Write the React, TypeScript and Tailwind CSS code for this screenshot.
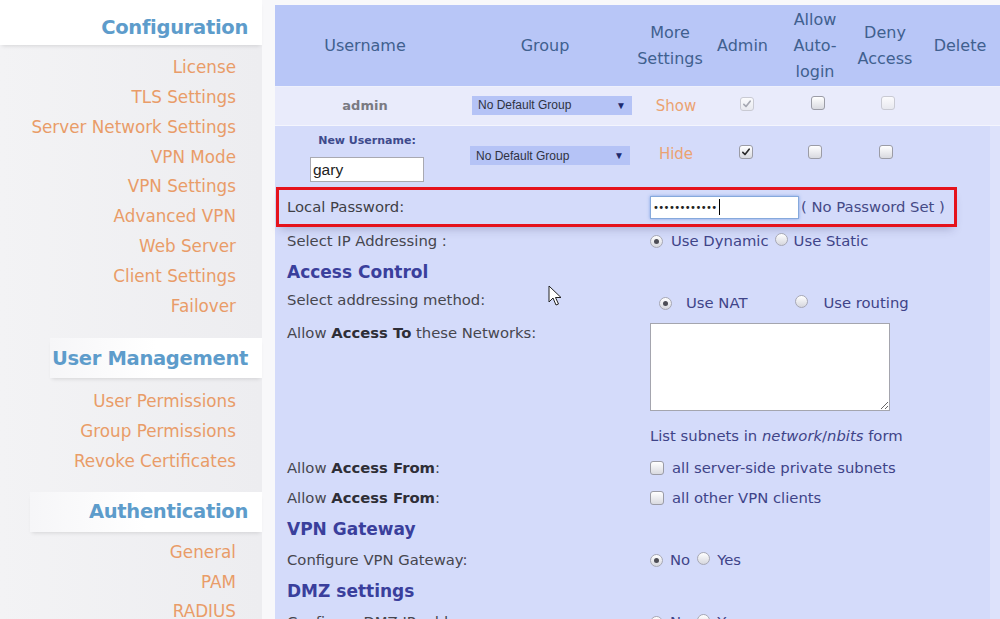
import React from 'react';

const sideFont = { fontFamily: '"DejaVu Sans", Verdana, sans-serif' };

const Checkbox: React.FC<{ checked?: boolean; disabled?: boolean }> = ({ checked, disabled }) => (
    <span
        className={`relative inline-flex items-center justify-center w-[14px] h-[14px] rounded-[3px] border ${
            disabled ? 'border-[#c9cad3] bg-gradient-to-b from-[#fbfbfd] to-[#e8e9ef]' : 'border-[#9b9ca6] bg-gradient-to-b from-white to-[#d9dae0]'
        }`}
    >
        {checked && (
            <svg viewBox="0 0 12 12" className="w-[10px] h-[10px]">
                <path
                    d="M2.2 6.4 L4.8 9 L9.8 2.6"
                    fill="none"
                    stroke={disabled ? '#a6a8b2' : '#2b2b2b'}
                    strokeWidth="2"
                    strokeLinecap="round"
                    strokeLinejoin="round"
                />
            </svg>
        )}
    </span>
);

const Radio: React.FC<{ checked?: boolean }> = ({ checked }) => (
    <span className="inline-flex items-center justify-center w-[13px] h-[13px] rounded-full border border-[#a7a8b4] bg-gradient-to-b from-white to-[#d6d7de]">
        {checked && <span className="w-[5px] h-[5px] rounded-full bg-[#4d4d55]" />}
    </span>
);

const Select: React.FC = () => (
    <div
        className="flex items-center justify-between w-[160px] h-[19px] px-[6px] bg-[#b5c3f6] text-[12px] text-[#2f3242]"
        style={{ fontFamily: '"Liberation Sans", Arial, sans-serif' }}
    >
        <span>No Default Group</span>
        <span className="text-[10px] text-[#1d2a6e]">▼</span>
    </div>
);

const SideHeader: React.FC<{ title: string; from: string; h?: string }> = ({ title, from, h = 'h-[40px]' }) => (
    <div className={`${h} flex items-center justify-end pr-[14px] bg-gradient-to-r ${from} via-white to-white shadow-[0_3px_4px_-2px_rgba(0,0,0,0.12)]`}>
        <span className="whitespace-nowrap text-[19.5px] font-bold text-[#5d9ccb] tracking-[-0.3px]">{title}</span>
    </div>
);

const SideLink: React.FC<{ label: string }> = ({ label }) => (
    <div className="h-[29.8px] flex items-center justify-end pr-[26px] whitespace-nowrap text-[16.8px] text-[#e99c68]">{label}</div>
);

const Sidebar: React.FC = () => (
    <aside className="w-[262px] shrink-0 bg-gradient-to-r from-[#f3f3f5] to-[#ededf0]" style={sideFont}>
        <SideHeader title="Configuration" from="from-white" h="h-[45px] pt-[10px]" />
        <div className="pt-[8px]">
            {['License', 'TLS Settings', 'Server Network Settings', 'VPN Mode', 'VPN Settings', 'Advanced VPN', 'Web Server', 'Client Settings', 'Failover'].map((l) => (
                <SideLink key={l} label={l} />
            ))}
        </div>
        <div className="mt-[17px] ml-[50px]">
            <SideHeader title="User Management" from="from-[#f6f6f8]" />
        </div>
        <div className="pt-[9px]">
            {['User Permissions', 'Group Permissions', 'Revoke Certificates'].map((l) => (
                <SideLink key={l} label={l} />
            ))}
        </div>
        <div className="mt-[15px] ml-[30px]">
            <SideHeader title="Authentication" from="from-[#f6f6f8]" />
        </div>
        <div className="pt-[6px]">
            {['General', 'PAM', 'RADIUS'].map((l) => (
                <SideLink key={l} label={l} />
            ))}
        </div>
    </aside>
);

const FormRow: React.FC<{ h: string; label: React.ReactNode; children?: React.ReactNode }> = ({ h, label, children }) => (
    <div className={`flex items-center ${h}`}>
        <div className="w-[375px] shrink-0 pl-[12px] whitespace-nowrap text-[#46464e]">{label}</div>
        <div className="flex items-center whitespace-nowrap text-[#3f4488]">{children}</div>
    </div>
);

const Heading: React.FC<{ h: string; title: string }> = ({ h, title }) => (
    <div className={`flex items-center ${h} pl-[12px] text-[17px] font-bold text-[#3a3f9c]`}>{title}</div>
);

const Cursor: React.FC = () => (
    <svg viewBox="0 0 14 22" className="absolute left-[273px] top-[280px] w-[14px] h-[22px]">
        <path d="M1 1 L1 17 L5 13 L8 20 L10.5 19 L7.5 12.5 L13 12.5 Z" fill="white" stroke="#222" strokeWidth="1" strokeLinejoin="round" />
    </svg>
);

const cols = 'grid grid-cols-[180px_180px_70px_75px_70px_70px_80px]';

const App: React.FC = () => {
    return (
        <div className="flex w-[1000px] h-[619px] overflow-hidden bg-[#f8f8fa]">
            <Sidebar />
            <main
                className="relative ml-[13px] mt-[5px] flex-1 bg-[#d4dbfa] text-[14.8px]"
                style={{ fontFamily: '"DejaVu Sans", Verdana, sans-serif' }}
            >
                {/* table header */}
                <div className={`${cols} h-[82px] bg-[#b8c6f7] text-[16px] leading-[26px] text-[#40608f] text-center border-b border-[#eef0fc]`}>
                    <div className="flex items-center justify-center">Username</div>
                    <div className="flex items-center justify-center">Group</div>
                    <div className="flex items-center justify-center">More<br />Settings</div>
                    <div className="flex items-center justify-center">Admin</div>
                    <div className="flex items-center justify-center">Allow<br />Auto-<br />login</div>
                    <div className="flex items-center justify-center">Deny<br />Access</div>
                    <div className="flex items-center justify-center">Delete</div>
                </div>

                {/* admin row */}
                <div className={`${cols} h-[39px] bg-[#e9ebfb] border-b border-[#f4f5fd] items-center`}>
                    <div className="text-center text-[13px] font-bold text-[#7a7a82]">admin</div>
                    <div className="pl-[17px] pb-[2px]"><Select /></div>
                    <div className="text-center pl-[12px] text-[15px] text-[#eba271]">Show</div>
                    <div className="flex justify-center pl-[8px] pb-[4px]"><Checkbox checked disabled /></div>
                    <div className="flex justify-center pl-[6px] pb-[6px]"><Checkbox /></div>
                    <div className="flex justify-center pl-[6px] pb-[6px]"><Checkbox disabled /></div>
                    <div />
                </div>

                <div className="flex">
                    <div className="w-[715px] shrink-0">
                        {/* new user row */}
                        <div className={`${cols} h-[58px] items-start`}>
                            <div className="flex flex-col items-center pt-[7px]">
                                <span className="text-[11px] font-bold text-[#3e4a8c] pl-[4px]">New Username:</span>
                                <div
                                    className="mt-[7px] ml-[4px] w-[114px] h-[25px] bg-white border border-[#a9a9b1] flex items-end px-[2px] text-[15.5px] leading-[22px] text-[#222]"
                                    style={{ fontFamily: '"Liberation Sans", Arial, sans-serif' }}
                                >
                                    gary
                                </div>
                            </div>
                            <div className="pl-[15px] pt-[20px]"><Select /></div>
                            <div className="text-center pl-[12px] pt-[17px] text-[15px] text-[#eba271]">Hide</div>
                            <div className="flex justify-center pl-[6px] pt-[19px]"><Checkbox checked /></div>
                            <div className="flex justify-center pt-[19px]"><Checkbox /></div>
                            <div className="flex justify-center pl-[2px] pt-[19px]"><Checkbox /></div>
                            <div />
                        </div>

                        {/* form */}
                        <div className="mt-[3px]">
                            <div className="ml-[1px] w-[681px] h-[40px] border-[3px] border-[#e5131c] flex items-center shadow-[0_6px_10px_-4px_rgba(40,40,90,0.25)]">
                                <div className="w-[371px] shrink-0 pl-[8px] text-[#3f3f46]">Local Password:</div>
                                <div className="w-[149px] h-[23px] bg-white border border-[#86a9dc] shadow-[0_0_3px_rgba(90,140,220,0.7)] flex items-center pl-[2px] text-[10px] tracking-[-0.6px] text-[#222]">
                                    ••••••••••••<span className="ml-[2px] w-px h-[16px] bg-black" />
                                </div>
                                <span className="ml-[2px] whitespace-nowrap text-[#454a86]">( No Password Set )</span>
                            </div>

                            <div className="pt-[2px]">
                                <FormRow h="h-[24px]" label="Select IP Addressing :">
                                    <Radio checked />
                                    <span className="ml-[8px]">Use Dynamic</span>
                                    <span className="ml-[6px]"><Radio /></span>
                                    <span className="ml-[6px]">Use Static</span>
                                </FormRow>
                                <Heading h="h-[36px] pt-[4px]" title="Access Control" />
                                <FormRow h="h-[22px]" label="Select addressing method:">
                                    <span className="ml-[9px] mt-[6px] flex items-center">
                                        <Radio checked />
                                        <span className="ml-[14px]">Use NAT</span>
                                        <span className="ml-[48px]"><Radio /></span>
                                        <span className="ml-[15px]">Use routing</span>
                                    </span>
                                </FormRow>
                                <div className="flex h-[104px]">
                                    <div className="w-[375px] shrink-0 pl-[12px] pt-[12px] leading-[20px] text-[#46464e]">
                                        Allow <b className="text-[#2e2e36]">Access To</b> these Networks:
                                    </div>
                                    <textarea readOnly className="mt-[12px] w-[240px] h-[88px] bg-white border border-[#a4a5ae] resize-y" />
                                </div>
                                <FormRow h="h-[42px]" label="">
                                    <span>List subnets in <i>network</i>/<i>nbits</i> form</span>
                                </FormRow>
                                <FormRow h="h-[22px]" label={<>Allow <b className="text-[#2e2e36]">Access From</b>:</>}>
                                    <Checkbox />
                                    <span className="ml-[8px]">all server-side private subnets</span>
                                </FormRow>
                                <FormRow h="h-[38px]" label={<>Allow <b className="text-[#2e2e36]">Access From</b>:</>}>
                                    <Checkbox />
                                    <span className="ml-[8px]">all other VPN clients</span>
                                </FormRow>
                                <Heading h="h-[26px]" title="VPN Gateway" />
                                <FormRow h="h-[34px]" label="Configure VPN Gateway:">
                                    <Radio checked />
                                    <span className="ml-[7px]">No</span>
                                    <span className="ml-[7px]"><Radio /></span>
                                    <span className="ml-[7px]">Yes</span>
                                </FormRow>
                                <Heading h="h-[30px]" title="DMZ settings" />
                                <FormRow h="h-[30px]" label="Configure DMZ IP address:">
                                    <Radio checked />
                                    <span className="ml-[7px]">No</span>
                                    <span className="ml-[7px]"><Radio /></span>
                                    <span className="ml-[7px]">Yes</span>
                                </FormRow>
                            </div>
                        </div>
                    </div>
                    <div className="flex-1 bg-[#dde2fb]" />
                </div>
                <Cursor />
            </main>
        </div>
    );
};

export default App;
